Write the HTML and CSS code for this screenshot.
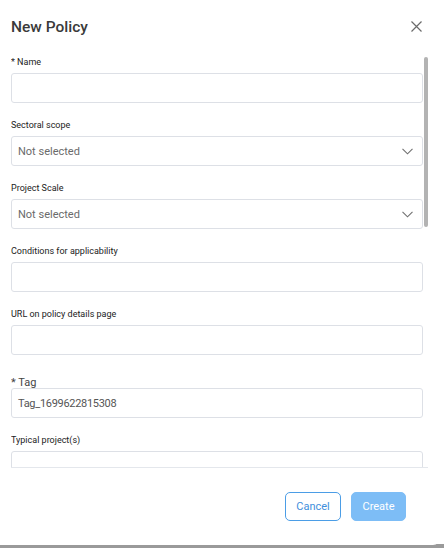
FILE: index.html
```html
<!DOCTYPE html>
<html>
<head>
<meta charset="utf-8">
<link rel="stylesheet" href="styles.css">
</head>
<body>
<div class="page">
  <div class="modal">
    <div class="header">
      <h1 class="title">New Policy</h1>
      <button class="close" aria-label="Close">
        <svg width="11" height="11" viewBox="0 0 11 11"><path d="M0.5 0.5 L10.5 10.5 M10.5 0.5 L0.5 10.5" stroke="#6b6b6b" stroke-width="1.2" fill="none"/></svg>
      </button>
    </div>
    <div class="scroll-wrap">
      <div class="body">
        <div class="field">
          <div class="label">* Name</div>
          <div class="input"></div>
        </div>
        <div class="field">
          <div class="label">Sectoral scope</div>
          <div class="input select"><span class="placeholder">Not selected</span>
            <svg class="chev" width="11" height="7" viewBox="0 0 11 7"><path d="M0.5 0.8 L5.5 5.8 L10.5 0.8" stroke="#707070" stroke-width="1.1" fill="none"/></svg>
          </div>
        </div>
        <div class="field">
          <div class="label">Project Scale</div>
          <div class="input select"><span class="placeholder">Not selected</span>
            <svg class="chev" width="11" height="7" viewBox="0 0 11 7"><path d="M0.5 0.8 L5.5 5.8 L10.5 0.8" stroke="#707070" stroke-width="1.1" fill="none"/></svg>
          </div>
        </div>
        <div class="field">
          <div class="label">Conditions for applicability</div>
          <div class="input"></div>
        </div>
        <div class="field">
          <div class="label">URL on policy details page</div>
          <div class="input"></div>
        </div>
        <div class="field">
          <div class="label label-lg">* Tag</div>
          <div class="input"><span class="value">Tag_1699622815308</span></div>
        </div>
        <div class="field">
          <div class="label">Typical project(s)</div>
          <div class="input"></div>
        </div>
      </div>
      <div class="thumb"></div>
    </div>
    <div class="footer">
      <button class="btn btn-outline">Cancel</button>
      <button class="btn btn-primary">Create</button>
    </div>
  </div>
</div>
</body>
</html>
```

FILE: styles.css
```css
html, body {
  margin: 0;
  padding: 0;
  background: #ffffff;
}
.page {
  width: 444px;
  height: 548px;
  background: linear-gradient(to bottom, #ffffff 0, #ffffff 544px, #9a9a9a 544px, #9a9a9a 548px);
  overflow: hidden;
}
.modal {
  width: 440px;
  height: 545px;
  background: #ffffff;
  border-radius: 0 0 7px 0;
  display: flex;
  flex-direction: column;
  font-family: Roboto, "Liberation Sans", sans-serif;
}
.header {
  height: 55px;
  box-sizing: border-box;
  padding: 15px 18px 0 11px;
  display: flex;
  justify-content: space-between;
  align-items: flex-start;
}
.title {
  margin: 0;
  font-size: 15.5px;
  font-weight: 500;
  line-height: 24px;
  color: #3a3a3a;
}
.close {
  border: none;
  background: none;
  padding: 0;
  margin-top: 6px;
  width: 11px;
  height: 11px;
  display: flex;
}
.scroll-wrap {
  position: relative;
  margin-left: 11px;
  width: 417px;
  height: 412px;
  border-bottom: 1px solid #e4e7ec;
}
.body {
  width: 412px;
  height: 412px;
  box-sizing: border-box;
  padding-top: 1px;
  overflow: hidden;
}
.thumb {
  position: absolute;
  right: 0;
  top: 2px;
  width: 4px;
  height: 170px;
  background: #b3b3b3;
  border-radius: 2px;
}
.field {
  width: 412px;
  margin-bottom: 16px;
}
.label {
  font-size: 9px;
  line-height: 12px;
  color: #222;
  margin-bottom: 5px;
  white-space: nowrap;
}
.label-lg {
  font-size: 11px;
  line-height: 11px;
  height: 17px;
  box-sizing: border-box;
  padding-top: 6px;
  margin-bottom: 0;
  color: #444;
}
.input {
  height: 30px;
  box-sizing: border-box;
  border: 1px solid #dde0e6;
  border-radius: 3px;
  background: #fff;
  display: flex;
  align-items: center;
  padding: 0 9px 0 6px;
}
.select {
  justify-content: space-between;
}
.placeholder {
  font-size: 11px;
  color: #6a6a6a;
}
.value {
  font-size: 11px;
  color: #555;
  letter-spacing: -0.3px;
}
.chev {
  display: block;
}
.footer {
  display: flex;
  justify-content: flex-end;
  gap: 10px;
  padding: 24px 34px 0 0;
}
.btn {
  height: 29px;
  box-sizing: border-box;
  border-radius: 5px;
  font-family: Roboto, "Liberation Sans", sans-serif;
  font-size: 11px;
  padding: 0;
  cursor: pointer;
}
.btn-outline {
  width: 56px;
  background: #fff;
  border: 1px solid #4b9de6;
  color: #3f8fdc;
}
.btn-primary {
  width: 55px;
  background: #7dbdf6;
  border: 1px solid #7dbdf6;
  color: #ffffff;
}
```
